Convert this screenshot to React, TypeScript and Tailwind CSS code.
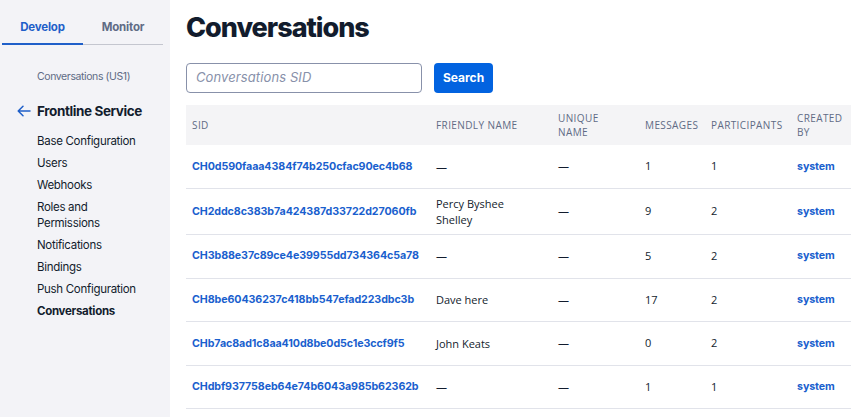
import React from "react";

const rows = [
  { sid: "CH0d590faaa4384f74b250cfac90ec4b68", name: "—", unique: "—", msgs: "1", parts: "1" },
  { sid: "CH2ddc8c383b7a424387d33722d27060fb", name: "Percy Byshee Shelley", unique: "—", msgs: "9", parts: "2" },
  { sid: "CH3b88e37c89ce4e39955dd734364c5a78", name: "—", unique: "—", msgs: "5", parts: "2" },
  { sid: "CH8be60436237c418bb547efad223dbc3b", name: "Dave here", unique: "—", msgs: "17", parts: "2" },
  { sid: "CHb7ac8ad1c8aa410d8be0d5c1e3ccf9f5", name: "John Keats", unique: "—", msgs: "0", parts: "2" },
  { sid: "CHdbf937758eb64e74b6043a985b62362b", name: "—", unique: "—", msgs: "1", parts: "1" },
];

const nav = ["Base Configuration", "Users", "Webhooks", "Roles and Permissions", "Notifications", "Bindings", "Push Configuration"];

export default function App() {
  return (
    <div className="flex h-[417px] w-[851px] overflow-hidden bg-white font-['Inter',sans-serif] text-[#121c2d]">
      <aside className="w-[170px] shrink-0 bg-[#f3f3f7]">
        <div className="ml-[2px] mr-[7px] flex h-[45px]">
          <div className="flex w-[81px] items-center justify-center border-b-2 border-[#1f5fc9] pt-[12px] text-[11.5px] font-bold tracking-[-0.2px] text-[#1f5fc9]">
            Develop
          </div>
          <div className="flex flex-1 items-center justify-center border-b border-[#c4c6cf] pt-[11px] text-[11.5px] font-bold tracking-[-0.2px] text-[#606b85]">
            Monitor
          </div>
        </div>
        <div className="mt-[25px] pl-[37px] text-[10.5px] leading-[14px] tracking-[-0.4px] text-[#606b85]">Conversations (US1)</div>
        <div className="mt-[18px] flex items-center pl-[17px]">
          <svg width="14" height="12" viewBox="0 0 14 12" fill="none" stroke="#1f5fc9" strokeWidth="1.5" strokeLinecap="round" strokeLinejoin="round" className="mr-[6px]">
            <path d="M13 6H1.5M6 1.2 1.2 6 6 10.8" />
          </svg>
          <span className="text-[13.5px] font-bold leading-[18px] tracking-[-0.4px]">Frontline Service</span>
        </div>
        <ul className="mt-[13px] flex flex-col gap-[6px] pl-[37px] pr-[16px] text-[11.5px] leading-[16px] tracking-[-0.3px]">
          {nav.map((n) => (
            <li key={n}>{n === "Roles and Permissions" ? (<>Roles and<br />Permissions</>) : n}</li>
          ))}
          <li className="font-bold">Conversations</li>
        </ul>
      </aside>
      <main className="min-w-0 flex-1 pl-[16px]">
        <h1 className="mt-[12px] text-[27px] font-extrabold leading-[32px] tracking-[-1px] text-[#121c2d]">Conversations</h1>
        <div className="mt-[19px] flex items-center gap-[12px]">
          <div className="flex h-[30px] w-[236px] items-center rounded-[4px] border border-[#8891aa] px-[9px] text-[13px] italic tracking-[0.1px] text-[#8891aa]">
            Conversations SID
          </div>
          <button className="h-[30px] w-[59px] rounded-[4px] bg-[#0263e0] text-[12px] font-bold text-white">Search</button>
        </div>
        <table className="mt-[12px] w-[690px] table-fixed border-collapse font-['Open_Sans',sans-serif] text-[11px]">
          <colgroup>
            <col className="w-[244px]" />
            <col className="w-[122px]" />
            <col className="w-[87px]" />
            <col className="w-[66px]" />
            <col className="w-[86px]" />
            <col className="w-[85px]" />
          </colgroup>
          <thead>
            <tr className="h-[40px] bg-[#f4f4f6] text-left text-[10px] uppercase leading-[14px] tracking-[0.4px] text-[#606b85]">
              <th className="px-[6px] font-normal">SID</th>
              <th className="px-[6px] font-normal">Friendly Name</th>
              <th className="px-[6px] font-normal">Unique<br />Name</th>
              <th className="px-[6px] font-normal">Messages</th>
              <th className="px-[6px] font-normal">Participants</th>
              <th className="px-[6px] font-normal">Created<br />By</th>
            </tr>
          </thead>
          <tbody>
            {rows.map((r) => (
              <tr key={r.sid} className="h-[43.6px] border-b border-[#e1e3ea]">
                <td className="px-[6px] font-['Inter',sans-serif] text-[10.7px] font-bold tracking-[-0.1px] text-[#1a5fce]">{r.sid}</td>
                <td className="px-[6px] py-[6.5px] leading-[16px] text-[#121c2d]">{r.name === "Percy Byshee Shelley" ? (<>Percy Byshee<br />Shelley</>) : r.name}</td>
                <td className="px-[6px] text-[#121c2d]">{r.unique}</td>
                <td className="px-[6px] text-[#121c2d]">{r.msgs}</td>
                <td className="px-[6px] text-[#121c2d]">{r.parts}</td>
                <td className="px-[6px] font-['Inter',sans-serif] text-[10.7px] font-bold tracking-[-0.1px] text-[#1a5fce]">system</td>
              </tr>
            ))}
          </tbody>
        </table>
      </main>
    </div>
  );
}
